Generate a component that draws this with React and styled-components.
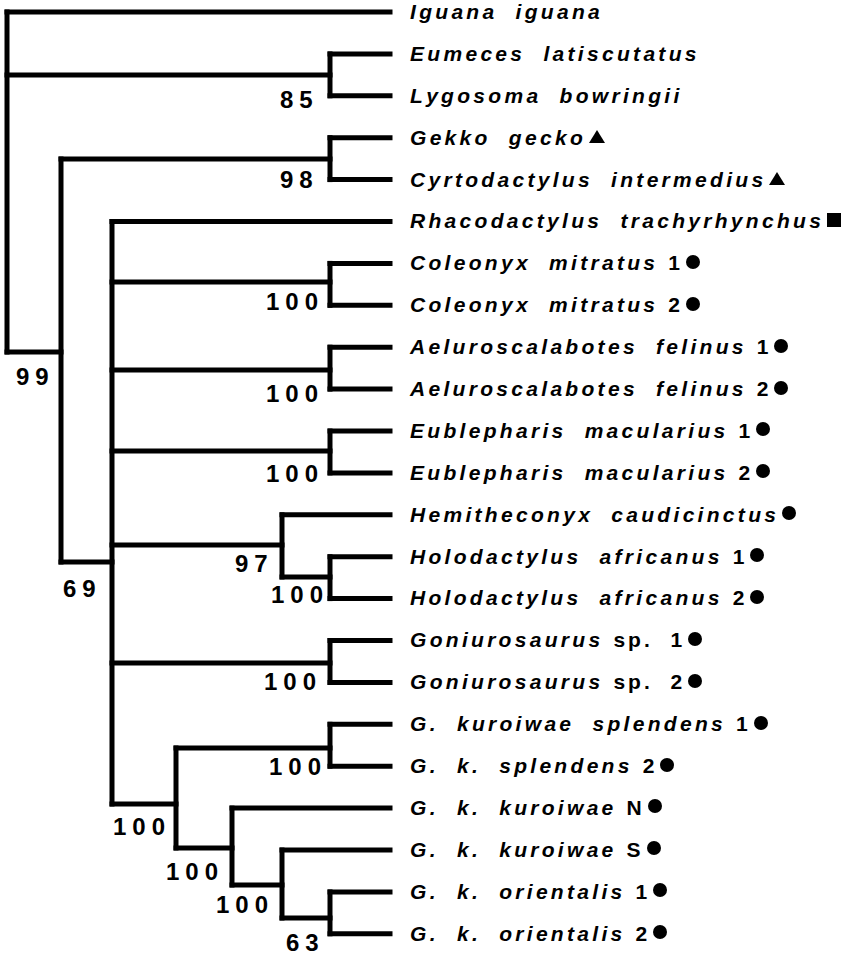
import React from 'react';
import styled, { createGlobalStyle } from 'styled-components';

const GlobalStyle = createGlobalStyle`
  html, body {
    margin: 0;
    padding: 0;
    background: #fff;
  }
  body {
    font-family: "Liberation Sans", Arial, Helvetica, sans-serif;
    color: #000;
  }
`;

// leaf spacing of the tree, in px
const ROW = 41.9;
const TOP = 12;
const LEAF_X = 390;
const leafY = (i) => TOP + i * ROW;

const taxa = [
  { name: 'Iguana iguana' },
  { name: 'Eumeces latiscutatus' },
  { name: 'Lygosoma bowringii' },
  { name: 'Gekko gecko', mark: 'triangle' },
  { name: 'Cyrtodactylus intermedius', mark: 'triangle' },
  { name: 'Rhacodactylus trachyrhynchus', mark: 'square' },
  { name: 'Coleonyx mitratus', tag: '1', mark: 'circle' },
  { name: 'Coleonyx mitratus', tag: '2', mark: 'circle' },
  { name: 'Aeluroscalabotes felinus', tag: '1', mark: 'circle' },
  { name: 'Aeluroscalabotes felinus', tag: '2', mark: 'circle' },
  { name: 'Eublepharis macularius', tag: '1', mark: 'circle' },
  { name: 'Eublepharis macularius', tag: '2', mark: 'circle' },
  { name: 'Hemitheconyx caudicinctus', mark: 'circle' },
  { name: 'Holodactylus africanus', tag: '1', mark: 'circle' },
  { name: 'Holodactylus africanus', tag: '2', mark: 'circle' },
  { name: 'Goniurosaurus', tag: 'sp. 1', mark: 'circle' },
  { name: 'Goniurosaurus', tag: 'sp. 2', mark: 'circle' },
  { name: 'G. kuroiwae splendens', tag: '1', mark: 'circle' },
  { name: 'G. k. splendens', tag: '2', mark: 'circle' },
  { name: 'G. k. kuroiwae', tag: 'N', mark: 'circle' },
  { name: 'G. k. kuroiwae', tag: 'S', mark: 'circle' },
  { name: 'G. k. orientalis', tag: '1', mark: 'circle' },
  { name: 'G. k. orientalis', tag: '2', mark: 'circle' },
];

const pair = (a, b) => [{ leaf: a }, { leaf: b }];

// node: x of its vertical bar, y where it hangs from its parent, support value [text, left x, mid y]
const tree = {
  x: 7,
  children: [
    { leaf: 0 },
    { x: 330, y: 75, support: ['85', 280, 99], children: pair(1, 2) },
    {
      x: 61, y: 352, support: ['99', 16, 376],
      children: [
        { x: 330, y: 159, support: ['98', 280, 179], children: pair(3, 4) },
        {
          x: 112, y: 562, support: ['69', 63, 588],
          children: [
            { leaf: 5 },
            { x: 330, y: 282, support: ['100', 266, 301], children: pair(6, 7) },
            { x: 330, y: 370, support: ['100', 266, 393], children: pair(8, 9) },
            { x: 330, y: 451, support: ['100', 266, 473], children: pair(10, 11) },
            {
              x: 282, y: 545, support: ['97', 235, 563],
              children: [
                { leaf: 12 },
                { x: 330, y: 577, support: ['100', 271, 594], children: pair(13, 14) },
              ],
            },
            { x: 330, y: 663, support: ['100', 264, 681], children: pair(15, 16) },
            {
              x: 176, y: 804, support: ['100', 113, 826],
              children: [
                { x: 330, y: 748, support: ['100', 269, 766], children: pair(17, 18) },
                {
                  x: 232, y: 848, support: ['100', 166, 871],
                  children: [
                    { leaf: 19 },
                    {
                      x: 282, y: 885, support: ['100', 216, 904],
                      children: [
                        { leaf: 20 },
                        { x: 330, y: 918, support: ['63', 286, 942], children: pair(21, 22) },
                      ],
                    },
                  ],
                },
              ],
            },
          ],
        },
      ],
    },
  ],
};

function collect(node, lines, supports) {
  const kids = node.children.map((c) =>
    c.leaf !== undefined ? { x: LEAF_X, y: leafY(c.leaf) } : { x: c.x, y: c.y }
  );
  const ys = kids.map((k) => k.y);
  lines.push([node.x, Math.min(...ys), node.x, Math.max(...ys)]);
  kids.forEach((k) => lines.push([node.x, k.y, k.x, k.y]));
  if (node.support) supports.push(node.support);
  node.children.forEach((c) => c.children && collect(c, lines, supports));
  return { lines, supports };
}

const { lines, supports } = collect(tree, [], []);

export default function App() {
  return (
    <>
      <GlobalStyle />
      <Figure>
        <TreeSvg width="402" height="954" viewBox="0 0 402 954">
          {lines.map(([x1, y1, x2, y2], i) => (
            <Branch key={i} x1={x1} y1={y1} x2={x2} y2={y2} />
          ))}
          {supports.map(([text, x, y], i) => (
            <Support key={i} x={x} y={y + 8.5}>{text}</Support>
          ))}
        </TreeSvg>
        <LabelList>
          {taxa.map((t, i) => (
            <Row key={i}>
              <Name>{t.name}</Name>
              {t.tag && <Tag>{t.tag}</Tag>}
              {t.mark && <Marker shape={t.mark} />}
            </Row>
          ))}
        </LabelList>
      </Figure>
    </>
  );
}

const Figure = styled.div`
  display: flex;
  flex-direction: row;
  align-items: flex-start;
  width: 846px;
  height: 954px;
  overflow: hidden;
`;

const TreeSvg = styled.svg`
  display: block;
  flex: none;
`;

const Branch = styled.line`
  stroke: #000;
  stroke-width: 5;
  stroke-linecap: square;
`;

const Support = styled.text`
  font-family: "Liberation Sans", Arial, sans-serif;
  font-weight: 700;
  font-size: 24px;
  letter-spacing: 6px;
  fill: #000;
`;

const LabelList = styled.div`
  display: flex;
  flex-direction: column;
  row-gap: ${ROW - 24}px;
  margin-left: 8px;
`;

const Row = styled.div`
  display: flex;
  flex-direction: row;
  align-items: center;
  height: 24px;
  white-space: nowrap;
`;

const Name = styled.span`
  font-size: 21px;
  line-height: 24px;
  font-weight: 700;
  font-style: italic;
  letter-spacing: 3.3px;
  word-spacing: 9px;
`;

const Tag = styled.span`
  font-size: 21px;
  line-height: 24px;
  font-weight: 700;
  letter-spacing: 3px;
  word-spacing: 9px;
  margin-left: 10px;
`;

const Marker = styled.span`
  flex: none;
  display: block;
  margin-left: 3px;
  margin-bottom: 3px;
  width: ${(p) => (p.shape === 'triangle' ? '0' : '14px')};
  height: ${(p) => (p.shape === 'triangle' ? '0' : '14px')};
  background: ${(p) => (p.shape === 'triangle' ? 'transparent' : '#000')};
  border-radius: ${(p) => (p.shape === 'circle' ? '50%' : '0')};
  border-left: ${(p) => (p.shape === 'triangle' ? '8px solid transparent' : 'none')};
  border-right: ${(p) => (p.shape === 'triangle' ? '8px solid transparent' : 'none')};
  border-bottom: ${(p) => (p.shape === 'triangle' ? '13px solid #000' : 'none')};
`;
